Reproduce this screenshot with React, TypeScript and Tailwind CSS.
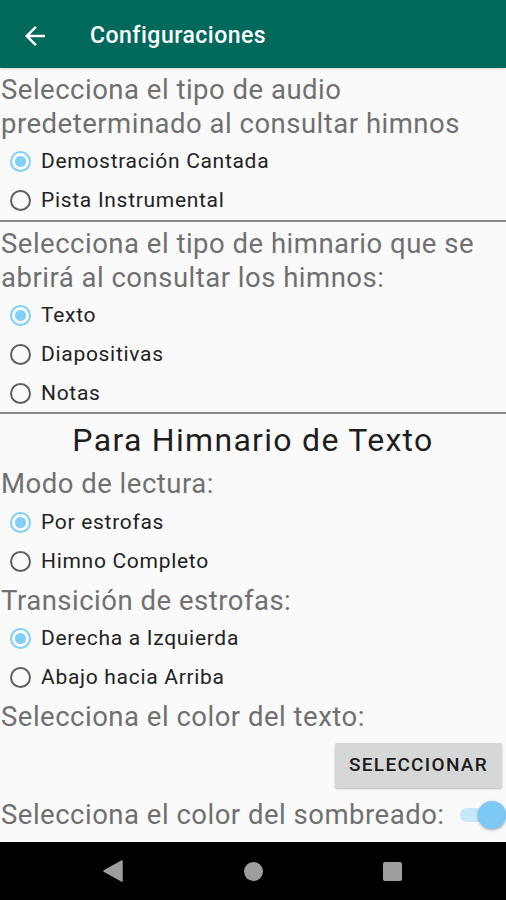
import React, { useState } from "react";

type Option = { label: string };

function Radio({ checked, label, onClick }: { checked: boolean; label: string; onClick: () => void }) {
  return (
    <div className="flex h-[39px] items-center cursor-pointer pt-[2px]" onClick={onClick}>
      <div className="ml-[9px] flex h-[22px] w-[22px] items-center justify-center">
        {checked ? (
          <span className="flex h-[21px] w-[21px] items-center justify-center rounded-full border-2 border-[#80cff6]">
            <span className="h-[11px] w-[11px] rounded-full bg-[#80cff6]" />
          </span>
        ) : (
          <span className="h-[21px] w-[21px] rounded-full border-2 border-[#5f5f5f]" />
        )}
      </div>
      <span className="ml-[10px] text-[21px] tracking-[0.7px] text-[#222]">{label}</span>
    </div>
  );
}

function Group({ options, initial }: { options: Option[]; initial: number }) {
  const [sel, setSel] = useState(initial);
  return (
    <div>
      {options.map((o, i) => (
        <Radio key={o.label} label={o.label} checked={sel === i} onClick={() => setSel(i)} />
      ))}
    </div>
  );
}

function Heading({ children, className = "" }: { children: React.ReactNode; className?: string }) {
  return (
    <p className={"pl-[1px] text-[27.5px] leading-[34px] tracking-[0.5px] text-[#707070] " + className}>
      {children}
    </p>
  );
}

export default function App() {
  const [shade, setShade] = useState(true);

  return (
    <div
      className="flex h-[900px] w-full flex-col bg-[#fafafa]"
      style={{ fontFamily: "Roboto, 'Noto Sans', sans-serif" }}
    >
      <header className="flex h-[68px] shrink-0 items-center bg-[#00695c] pt-[4px] shadow">
        <svg width="30" height="30" viewBox="0 0 24 24" className="ml-[20px]" fill="white">
          <path d="M20 11H7.83l5.59-5.59L12 4l-8 8 8 8 1.41-1.41L7.83 13H20v-2z" />
        </svg>
        <h1 className="ml-[40px] text-[23px] font-medium tracking-[0.5px] text-white">Configuraciones</h1>
      </header>

      <main className="flex-1 overflow-hidden">
        <section className="pt-[5px]">
          <Heading>
            Selecciona el tipo de audio
            <br />
            predeterminado al consultar himnos
          </Heading>
          <Group options={[{ label: "Demostración Cantada" }, { label: "Pista Instrumental" }]} initial={0} />
        </section>
        <div className="mt-[1px] h-[2px] bg-[#8a8a8a]" />

        <section className="pt-[5px]">
          <Heading>
            Selecciona el tipo de himnario que se
            <br />
            abrirá al consultar los himnos:
          </Heading>
          <Group options={[{ label: "Texto" }, { label: "Diapositivas" }, { label: "Notas" }]} initial={0} />
        </section>
        <div className="h-[2px] bg-[#8a8a8a]" />

        <h2 className="mt-[6px] text-center text-[32px] leading-[40px] tracking-[1.3px] text-[#1e1e1e]">
          Para Himnario de Texto
        </h2>
        <Heading className="mt-[7px]">Modo de lectura:</Heading>
        <div className="mt-[1px]">
          <Group options={[{ label: "Por estrofas" }, { label: "Himno Completo" }]} initial={0} />
        </div>
        <Heading className="mt-[4px]">Transición de estrofas:</Heading>
        <Group options={[{ label: "Derecha a Izquierda" }, { label: "Abajo hacia Arriba" }]} initial={0} />
        <Heading className="mt-[4px]">Selecciona el color del texto:</Heading>
        <div className="mt-[9px] flex justify-end pr-[4px]">
          <button className="h-[45px] w-[167px] rounded-[2px] bg-[#d6d7d7] text-[19px] font-medium tracking-[1.3px] text-[#1a1a1a] shadow-[0_1px_2px_rgba(0,0,0,0.25)]">
            SELECCIONAR
          </button>
        </div>
        <div className="mt-[10px] flex items-center justify-between">
          <Heading>Selecciona el color del sombreado:</Heading>
          <button
            onClick={() => setShade(!shade)}
            className="relative h-[30px] w-[46px] shrink-0"
            aria-label="sombreado"
          >
            <span className="absolute left-0 right-0 top-[8px] h-[14px] rounded-full bg-[#c7e8fa]" />
            <span
              className={
                "absolute top-[1px] h-[28px] w-[28px] rounded-full shadow-[0_1px_3px_rgba(0,0,0,0.35)] " +
                (shade ? "left-[18px] bg-[#7cc9f5]" : "left-0 bg-[#eee]")
              }
            />
          </button>
        </div>
      </main>

      <nav className="flex h-[58px] shrink-0 items-center bg-black">
        <div className="flex w-full items-center">
          <svg width="20" height="22" viewBox="0 0 20 22" className="ml-[103px]">
            <path d="M19 1 L19 21 L1 11 Z" fill="#9e9e9e" stroke="#9e9e9e" strokeWidth="1.5" strokeLinejoin="round" />
          </svg>
          <span className="ml-[121px] h-[19px] w-[19px] rounded-full bg-[#9e9e9e]" />
          <span className="ml-[120px] h-[19px] w-[19px] rounded-[2px] bg-[#9e9e9e]" />
        </div>
      </nav>
    </div>
  );
}
